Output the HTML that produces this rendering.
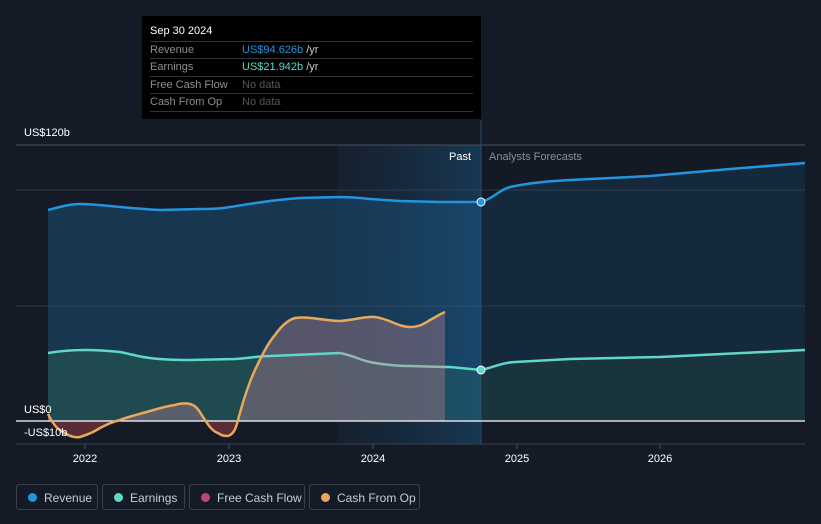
<!DOCTYPE html>
<html><head><meta charset="utf-8"><style>
body{margin:0;width:821px;height:524px;background:#151b26;font-family:"Liberation Sans",sans-serif;overflow:hidden;position:relative}
.tt{position:absolute;left:142px;top:16px;width:339px;height:103px;background:#000;color:#fff;font-size:11px}
.tt .h{position:absolute;left:8px;top:9px;font-size:11px}
.row{position:absolute;left:8px;width:323px;height:17px;border-top:1px solid #333;color:#8a8f96;line-height:17px}
.row span{position:absolute;left:92px}
.leg{position:absolute;top:484px;height:26px;border:1px solid #3a404a;border-radius:3px;color:#c8ccd2;font-size:12px;line-height:26px;box-sizing:border-box}
.leg i{position:absolute;left:11px;top:8px;width:9px;height:9px;border-radius:50%}
.leg b{font-weight:normal;position:absolute;left:27px}
</style></head><body>
<svg width="821" height="524" style="position:absolute;left:0;top:0">
<defs>
<linearGradient id="pst" x1="0" x2="1"><stop offset="0" stop-color="#1a4a70" stop-opacity="0.1"/><stop offset="1" stop-color="#1a5a8a" stop-opacity="0.45"/></linearGradient>
</defs>
<path d="M48,210 C60,207 70,204 80,204 C100,204 120,208 160,210 L200,209 C215,209 225,208 230,207 C250,204 270,200 300,198 L340,197 C355,197 360,198 370,199 L400,201 L440,202 L481,202 C495,198 500,188 515,186 C530,183 550,181 570,180 L650,176 L730,169 L805,163 L805,421 L48,421Z" fill="#173650"/>
<path d="M48,353 C60,351 75,350 85,350 C100,350 110,351 120,352 C135,355 140,357 150,358 C165,360 180,360 190,360 L235,359 C250,358 260,356 270,356 L340,353 C355,356 360,360 370,362 C385,365 395,366 410,366 L450,367 L481,370 C495,367 500,363 515,362 L570,359 L660,357 L805,350 L805,421 L48,421Z" fill="#1f4a50"/>
<rect x="481" y="145" width="324" height="276" fill="#151b26" opacity="0.45"/>
<rect x="337" y="145" width="144" height="299" fill="url(#pst)"/>
<path d="M48,414 C52,422 56,428 60,430 C68,436 75,438 80,437 C90,434 95,431 100,428 C108,424 112,422 120,420 C130,416 140,414 150,411 C160,408 168,406 175,405 C182,403 186,403 190,404 C198,406 200,413 205,420 C210,428 214,432 218,433 C222,436 225,436 228,436 C234,434 236,428 238,420 C242,405 248,385 255,370 C262,355 268,343 275,335 C282,325 288,320 295,318 C310,316 325,321 340,321 C355,320 365,316 375,317 C390,319 398,327 410,327 C420,327 425,323 430,320 C436,317 440,314 445,312 L445,421 L48,421Z" fill="#8a7080" opacity="0.55"/>
<path d="M48,421 L60,430 C68,436 75,438 80,437 C90,434 95,431 100,428 L112,421Z M205,421 C210,428 214,432 218,433 C222,436 225,436 228,436 C234,434 236,428 238,421Z" fill="#5a2530" opacity="0.8"/>
<line x1="16" y1="145" x2="805" y2="145" stroke="#4a515c"/>
<line x1="16" y1="190" x2="805" y2="190" stroke="#4a515c" opacity="0.5"/>
<line x1="16" y1="306" x2="805" y2="306" stroke="#4a515c" opacity="0.5"/>
<line x1="16" y1="444" x2="805" y2="444" stroke="#3a414c"/>
<line x1="481" y1="120" x2="481" y2="444" stroke="#2c4a6a"/>
<line x1="16" y1="421" x2="805" y2="421" stroke="#ffffff" stroke-width="1.2"/>
<path d="M48,210 C60,207 70,204 80,204 C100,204 120,208 160,210 L200,209 C215,209 225,208 230,207 C250,204 270,200 300,198 L340,197 C355,197 360,198 370,199 L400,201 L440,202 L481,202 C495,198 500,188 515,186 C530,183 550,181 570,180 L650,176 L730,169 L805,163" fill="none" stroke="#2394df" stroke-width="2.5"/>
<path d="M48,353 C60,351 75,350 85,350 C100,350 110,351 120,352 C135,355 140,357 150,358 C165,360 180,360 190,360 L235,359 C250,358 260,356 270,356 L340,353" fill="none" stroke="#5fd8c6" stroke-width="2.5"/>
<path d="M340,353 C355,356 360,360 370,362 C385,365 395,366 410,366 L445,367" fill="none" stroke="#8fbab2" stroke-width="2.5"/>
<path d="M445,367 L450,367 L481,370 C495,367 500,363 515,362 L570,359 L660,357 L805,350" fill="none" stroke="#5fd8c6" stroke-width="2.5"/>
<path d="M48,414 C52,422 56,428 60,430 C68,436 75,438 80,437 C90,434 95,431 100,428 C108,424 112,422 120,420 C130,416 140,414 150,411 C160,408 168,406 175,405 C182,403 186,403 190,404 C198,406 200,413 205,420 C210,428 214,432 218,433 C222,436 225,436 228,436 C234,434 236,428 238,420 C242,405 248,385 255,370 C262,355 268,343 275,335 C282,325 288,320 295,318 C310,316 325,321 340,321 C355,320 365,316 375,317 C390,319 398,327 410,327 C420,327 425,323 430,320 C436,317 440,314 445,312" fill="none" stroke="#e8a95c" stroke-width="2.5"/>
<circle cx="481" cy="202" r="4" fill="#2394df" stroke="#fff" stroke-width="1"/>
<circle cx="481" cy="370" r="4" fill="#5fd8c6" stroke="#fff" stroke-width="1"/>
<g font-size="11" fill="#fff">
<text x="24" y="136">US$120b</text>
<text x="24" y="413">US$0</text>
<text x="24" y="436">-US$10b</text>
<text x="449" y="160">Past</text>
<text x="489" y="160" fill="#8a9099">Analysts Forecasts</text>
<text x="85" y="462" text-anchor="middle">2022</text>
<text x="229" y="462" text-anchor="middle">2023</text>
<text x="373" y="462" text-anchor="middle">2024</text>
<text x="517" y="462" text-anchor="middle">2025</text>
<text x="660" y="462" text-anchor="middle">2026</text>
</g>
<g stroke="#4a505a"><line x1="85" y1="444" x2="85" y2="449"/><line x1="229" y1="444" x2="229" y2="449"/><line x1="373" y1="444" x2="373" y2="449"/><line x1="517" y1="444" x2="517" y2="449"/><line x1="660" y1="444" x2="660" y2="449"/></g>
</svg>
<div class="tt">
<div class="h">Sep 30 2024</div>
<div class="row" style="top:25px">Revenue<span><a style="color:#2394df">US$94.626b</a> <a style="color:#ccc">/yr</a></span></div>
<div class="row" style="top:42px">Earnings<span><a style="color:#5fd8c6">US$21.942b</a> <a style="color:#ccc">/yr</a></span></div>
<div class="row" style="top:60px">Free Cash Flow<span style="color:#555">No data</span></div>
<div class="row" style="top:77px;border-bottom:1px solid #333">Cash From Op<span style="color:#555">No data</span></div>
</div>
<div class="leg" style="left:16px;width:82px"><i style="background:#2394df"></i><b>Revenue</b></div>
<div class="leg" style="left:102px;width:83px"><i style="background:#5fd8c6"></i><b>Earnings</b></div>
<div class="leg" style="left:189px;width:116px"><i style="background:#c4407e"></i><b>Free Cash Flow</b></div>
<div class="leg" style="left:309px;width:111px"><i style="background:#e8a95c"></i><b>Cash From Op</b></div>
</body></html>
